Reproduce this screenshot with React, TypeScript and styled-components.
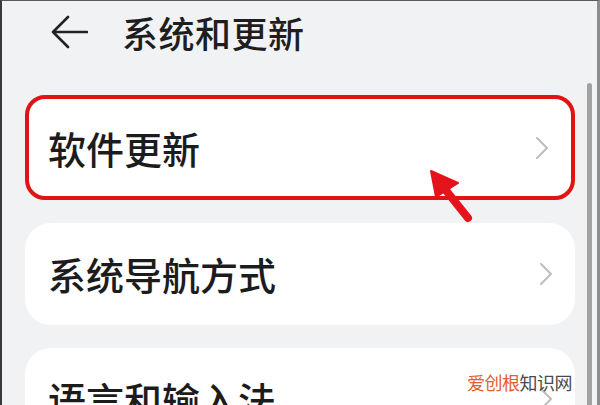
import styled, { createGlobalStyle } from "styled-components";

const GlobalStyle = createGlobalStyle`
  html, body {
    margin: 0;
    padding: 0;
    background: #f1f2f4;
  }
  body {
    font-family: "Noto Sans CJK SC", "Noto Sans", sans-serif;
  }
`;

const Screen = styled.div`
  position: relative;
  width: 600px;
  height: 405px;
  box-sizing: border-box;
  overflow: hidden;
  background: #f1f2f4;
  border-left: 2px solid #3a3a3a;
  border-top: 1px solid #5a5a5a;
  border-right: 3px solid #8d8d8d;
`;

const Header = styled.div`
  display: flex;
  align-items: center;
  gap: 34px;
  height: 62px;
  padding-left: 48px;
`;

const Title = styled.div`
  font-size: 36px;
  font-weight: 500;
  color: #1e1e1e;
  line-height: 1;
  letter-spacing: 0.5px;
`;

const List = styled.div`
  display: flex;
  flex-direction: column;
  gap: 23px;
  padding: 32px 0 0 23px;
  width: 550px;
`;

const Card = styled.div<{ $highlight?: boolean }>`
  display: flex;
  align-items: center;
  justify-content: space-between;
  box-sizing: border-box;
  height: ${(p) => (p.$highlight ? "105px" : "102px")};
  padding: 0 22px 0 ${(p) => (p.$highlight ? "19px" : "23px")};
  background: #ffffff;
  border: ${(p) => (p.$highlight ? "4px solid #e11414" : "none")};
  border-radius: ${(p) => (p.$highlight ? "20px" : "26px")};
`;

const Label = styled.span`
  font-size: 38px;
  font-weight: 500;
  line-height: 1;
  color: #1c1c1c;
`;

const ScrollBar = styled.div`
  position: absolute;
  top: 82px;
  right: 5px;
  bottom: -10px;
  width: 5px;
  border-radius: 3px;
  background: #a2a2a2;
`;

const Pointer = styled.svg`
  position: absolute;
  left: 420px;
  top: 160px;
`;

const Watermark = styled.div`
  position: absolute;
  left: 465px;
  top: 372px;
  font-size: 18px;
  line-height: 1;
  color: #4a4a4a;
  letter-spacing: -0.5px;

  em {
    font-style: normal;
    color: #e0612c;
  }
`;

const BackArrow = () => (
  <svg width="38" height="34" viewBox="0 0 38 34">
    <path
      d="M18 2 L3 17 L18 32 M3 17 H37"
      fill="none"
      stroke="#222"
      strokeWidth="2.6"
      strokeLinecap="round"
      strokeLinejoin="round"
    />
  </svg>
);

const Chevron = () => (
  <svg width="14" height="24" viewBox="0 0 14 24">
    <path
      d="M2 2 L12 12 L2 22"
      fill="none"
      stroke="#bdbdbd"
      strokeWidth="2"
      strokeLinecap="round"
      strokeLinejoin="round"
    />
  </svg>
);

const items = [
  { label: "软件更新", highlight: true },
  { label: "系统导航方式" },
  { label: "语言和输入法" },
];

export default function App() {
  return (
    <>
      <GlobalStyle />
      <Screen>
        <Header>
          <BackArrow />
          <Title>系统和更新</Title>
        </Header>
        <List>
          {items.map((item) => (
            <Card key={item.label} $highlight={item.highlight}>
              <Label>{item.label}</Label>
              <Chevron />
            </Card>
          ))}
        </List>
        <ScrollBar />
        <Pointer width="60" height="70" viewBox="0 0 60 70">
          <path d="M9 10 L36 22 L14 36 Z" fill="#e5141a" stroke="#e5141a" strokeWidth="2" strokeLinejoin="round" />
          <path d="M22 27 L46 57" stroke="#e5141a" strokeWidth="8" strokeLinecap="round" />
        </Pointer>
        <Watermark>
          <em>爱创根</em>知识网
        </Watermark>
      </Screen>
    </>
  );
}
